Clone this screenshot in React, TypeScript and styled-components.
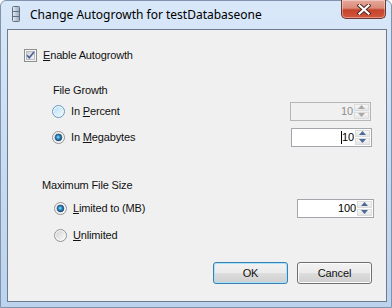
import React from 'react'
import styled, { createGlobalStyle } from 'styled-components'

const GlobalStyle = createGlobalStyle`
  html, body {
    margin: 0;
    padding: 0;
    background: #ffffff;
  }
  body {
    width: 392px;
    height: 308px;
    overflow: hidden;
    font-family: 'Liberation Sans', Arial, sans-serif;
  }
`

const Window = styled.div`
  width: 392px;
  height: 308px;
  box-sizing: border-box;
  display: flex;
  flex-direction: column;
  border: 1px solid #8193ab;
  border-radius: 6px 6px 0 0;
  background: linear-gradient(180deg, #d9e8f9 0%, #c9ddf3 45%, #bcd3ee 100%);
`

const TitleBar = styled.div`
  height: 28px;
  display: flex;
  align-items: flex-start;
  padding-left: 11px;
  flex-shrink: 0;
`

const TitleIcon = styled.svg`
  margin-top: 5px;
  flex-shrink: 0;
`

const TitleText = styled.div`
  margin-left: 10px;
  margin-top: 6px;
  font-family: 'Noto Sans', 'Open Sans', sans-serif;
  font-size: 12px;
  line-height: 15px;
  color: #000;
  white-space: nowrap;
`

const CloseButton = styled.div`
  margin-left: auto;
  margin-right: 5px;
  margin-top: -1px;
  width: 45px;
  height: 19px;
  box-sizing: border-box;
  border: 1px solid #6b3a35;
  border-top: none;
  border-radius: 0 0 5px 5px;
  background: linear-gradient(180deg, #e7a89b 0%, #d98b79 45%, #c5432b 55%, #d2583e 100%);
  box-shadow: inset 0 0 0 1px rgba(255, 255, 255, 0.35);
  display: flex;
  align-items: center;
  justify-content: center;
`

const FrameBody = styled.div`
  flex: 1;
  display: flex;
  padding: 0 4px 5px 6px;
`

const Client = styled.div`
  flex: 1;
  display: flex;
  flex-direction: column;
  border: 1px solid #6d7b8d;
  background: #f0f0f0;
  font-size: 11px;
  letter-spacing: -0.15px;
  color: #111;
`

const Row = styled.div<{ $top: number; $indent: number }>`
  display: flex;
  align-items: center;
  height: 20px;
  margin-top: ${(p) => p.$top}px;
  padding-left: ${(p) => p.$indent}px;
`

const Label = styled.span<{ $gap?: number }>`
  margin-left: ${(p) => p.$gap ?? 0}px;
  white-space: nowrap;
  line-height: 13px;
`

const Key = styled.span`
  text-decoration: underline;
  text-underline-offset: 1px;
`

const SpinBox = styled.div<{ $width: number; $right: number; $disabled?: boolean }>`
  margin-left: auto;
  margin-right: ${(p) => p.$right}px;
  width: ${(p) => p.$width}px;
  height: 19px;
  box-sizing: border-box;
  display: flex;
  border: 1px solid ${(p) => (p.$disabled ? '#b3b6b9' : '#a3a6ab')};
  background: ${(p) => (p.$disabled ? '#f0f0f0' : '#ffffff')};
`

const SpinValue = styled.div<{ $disabled?: boolean }>`
  flex: 1;
  display: flex;
  align-items: center;
  justify-content: flex-end;
  padding-right: 1px;
  color: ${(p) => (p.$disabled ? '#8d8d8d' : '#000')};
  font-size: 11px;
`

const Caret = styled.span`
  display: inline-block;
  width: 1px;
  height: 13px;
  background: #000;
`

const Spinner = styled.div`
  width: 15px;
  display: grid;
  grid-template-rows: 1fr 1fr;
  gap: 1px;
  padding: 1px 1px 1px 0;
`

const SpinButton = styled.div`
  display: flex;
  align-items: center;
  justify-content: center;
  box-sizing: border-box;
  border: 1px solid #dcdcdc;
  background: linear-gradient(180deg, #f6f6f6, #e6e6e6);
`

const ButtonRow = styled.div`
  display: flex;
  justify-content: flex-end;
  gap: 9px;
  margin-top: 17px;
  padding-right: 14px;
`

const PushButton = styled.div<{ $default?: boolean }>`
  width: 75px;
  height: 22px;
  box-sizing: border-box;
  display: flex;
  align-items: center;
  justify-content: center;
  border: 1px solid ${(p) => (p.$default ? '#3c7fb1' : '#707070')};
  border-radius: 3px;
  background: linear-gradient(180deg, #f2f2f2 0%, #ebebeb 49%, #dddddd 50%, #cfcfcf 100%);
  box-shadow: inset 0 0 0 1px ${(p) => (p.$default ? '#a6e3fa' : '#fbfbfb')};
  font-size: 11px;
`

function CheckBox() {
  return (
    <svg width="13" height="13" viewBox="0 0 13 13">
      <defs>
        <linearGradient id="cbFill" x1="0" y1="0" x2="1" y2="1">
          <stop offset="0" stopColor="#cbcfd5" />
          <stop offset="1" stopColor="#f6f6f6" />
        </linearGradient>
      </defs>
      <rect x="0.5" y="0.5" width="12" height="12" fill="#f4f4f4" stroke="#8e8f8f" />
      <rect x="2.5" y="2.5" width="8" height="8" fill="url(#cbFill)" stroke="#b9bdc3" />
      <path d="M3 6.3 L5.3 8.8 L10 3" fill="none" stroke="#4a5f97" strokeWidth="1.6" />
    </svg>
  )
}

function Radio({ checked, hover }: { checked?: boolean; hover?: boolean }) {
  const id = checked ? 'rC' : hover ? 'rH' : 'rN'
  return (
    <svg width="13" height="13" viewBox="0 0 13 13">
      <defs>
        <linearGradient id={id} x1="0" y1="0" x2="1" y2="1">
          <stop offset="0" stopColor={hover ? '#b9e1f7' : '#d2d2d2'} />
          <stop offset="1" stopColor={hover ? '#eef8fe' : '#fbfbfb'} />
        </linearGradient>
        <radialGradient id="rDot" cx="0.45" cy="0.45" r="0.6">
          <stop offset="0" stopColor="#9be0fa" />
          <stop offset="0.45" stopColor="#2a8ac4" />
          <stop offset="1" stopColor="#0d3f6d" />
        </radialGradient>
      </defs>
      <circle cx="6.5" cy="6.5" r="6" fill="#f6f6f6" stroke={hover ? '#5c9bc7' : '#929292'} />
      <circle cx="6.5" cy="6.5" r="4.5" fill={`url(#${id})`} />
      {checked && <circle cx="6.5" cy="6.5" r="3.4" fill="url(#rDot)" stroke="#1c3d5e" strokeWidth="0.5" />}
    </svg>
  )
}

function Arrow({ up, disabled }: { up?: boolean; disabled?: boolean }) {
  return (
    <svg width="7" height="4" viewBox="0 0 7 4">
      <path d={up ? 'M0 4 L3.5 0 L7 4 Z' : 'M0 0 L3.5 4 L7 0 Z'} fill={disabled ? '#a8a8a8' : '#4d6a9a'} />
    </svg>
  )
}

function Spin({
  value,
  width,
  right,
  disabled,
  focused,
}: {
  value: string
  width: number
  right: number
  disabled?: boolean
  focused?: boolean
}) {
  return (
    <SpinBox $width={width} $right={right} $disabled={disabled}>
      <SpinValue $disabled={disabled}>
        {focused && <Caret />}
        {value}
      </SpinValue>
      <Spinner>
        <SpinButton>
          <Arrow up disabled={disabled} />
        </SpinButton>
        <SpinButton>
          <Arrow disabled={disabled} />
        </SpinButton>
      </Spinner>
    </SpinBox>
  )
}

export default function App() {
  return (
    <>
      <GlobalStyle />
      <Window>
        <TitleBar>
          <TitleIcon width="8" height="16" viewBox="0 0 8 16">
            <defs>
              <linearGradient id="dbIcon" x1="0" y1="0" x2="1" y2="0">
                <stop offset="0" stopColor="#e6ecf3" />
                <stop offset="1" stopColor="#9aa9bb" />
              </linearGradient>
            </defs>
            <rect x="0.5" y="0.5" width="7" height="15" rx="1" fill="url(#dbIcon)" stroke="#5f6f84" />
            <line x1="1" y1="5.5" x2="7" y2="5.5" stroke="#5f6f84" />
            <line x1="1" y1="10.5" x2="7" y2="10.5" stroke="#5f6f84" />
          </TitleIcon>
          <TitleText>Change Autogrowth for testDatabaseone</TitleText>
          <CloseButton>
            <svg width="14" height="11" viewBox="0 0 14 11">
              <path d="M2.5 1.5 L11.5 9.5 M11.5 1.5 L2.5 9.5" stroke="#4a2420" strokeWidth="4" strokeLinecap="square" />
              <path d="M2.5 1.5 L11.5 9.5 M11.5 1.5 L2.5 9.5" stroke="#ffffff" strokeWidth="2.2" strokeLinecap="square" />
            </svg>
          </CloseButton>
        </TitleBar>
        <FrameBody>
          <Client>
            <Row $top={15} $indent={16}>
              <CheckBox />
              <Label $gap={6}>
                <Key>E</Key>nable Autogrowth
              </Label>
            </Row>
            <Row $top={15} $indent={45}>
              <Label>File Growth</Label>
            </Row>
            <Row $top={1} $indent={44}>
              <Radio hover />
              <Label $gap={6}>
                In <Key>P</Key>ercent
              </Label>
              <Spin value="10" width={81} right={15} disabled />
            </Row>
            <Row $top={6} $indent={44}>
              <Radio checked />
              <Label $gap={6}>
                In <Key>M</Key>egabytes
              </Label>
              <Spin value="10" width={81} right={14} focused />
            </Row>
            <Row $top={28} $indent={34}>
              <Label>Maximum File Size</Label>
            </Row>
            <Row $top={3} $indent={46}>
              <Radio checked />
              <Label $gap={6}>
                <Key>L</Key>imited to (MB)
              </Label>
              <Spin value="100" width={77} right={12} />
            </Row>
            <Row $top={7} $indent={46}>
              <Radio />
              <Label $gap={6}>
                <Key>U</Key>nlimited
              </Label>
            </Row>
            <ButtonRow>
              <PushButton $default>OK</PushButton>
              <PushButton>Cancel</PushButton>
            </ButtonRow>
          </Client>
        </FrameBody>
      </Window>
    </>
  )
}
